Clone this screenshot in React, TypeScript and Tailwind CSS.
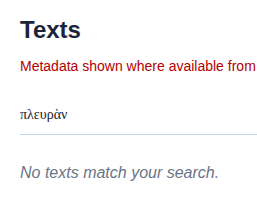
import React from 'react';

export default function App() {
  return (
    <div className="w-[257px] h-[206px] bg-white overflow-hidden font-['Liberation_Sans',Arial,sans-serif]">
      <div className="pl-5 pt-4">
        <h1 className="text-[24px] leading-[28px] font-bold text-[#1b2538]">Texts</h1>
        <p className="mt-[14px] text-[14px] leading-[16px] text-[#b30000] whitespace-nowrap">
          Metadata shown where available from
        </p>
        <div className="mt-[32px] pb-[10px] border-b border-[#c6d8e6] text-[14px] leading-[18px] text-[#222] font-['Liberation_Serif','Times_New_Roman',serif]">
          πλευρὰν
        </div>
        <p className="mt-[29px] text-[16px] leading-[18px] italic text-[#6b7588]">
          No texts match your search.
        </p>
      </div>
    </div>
  );
}
